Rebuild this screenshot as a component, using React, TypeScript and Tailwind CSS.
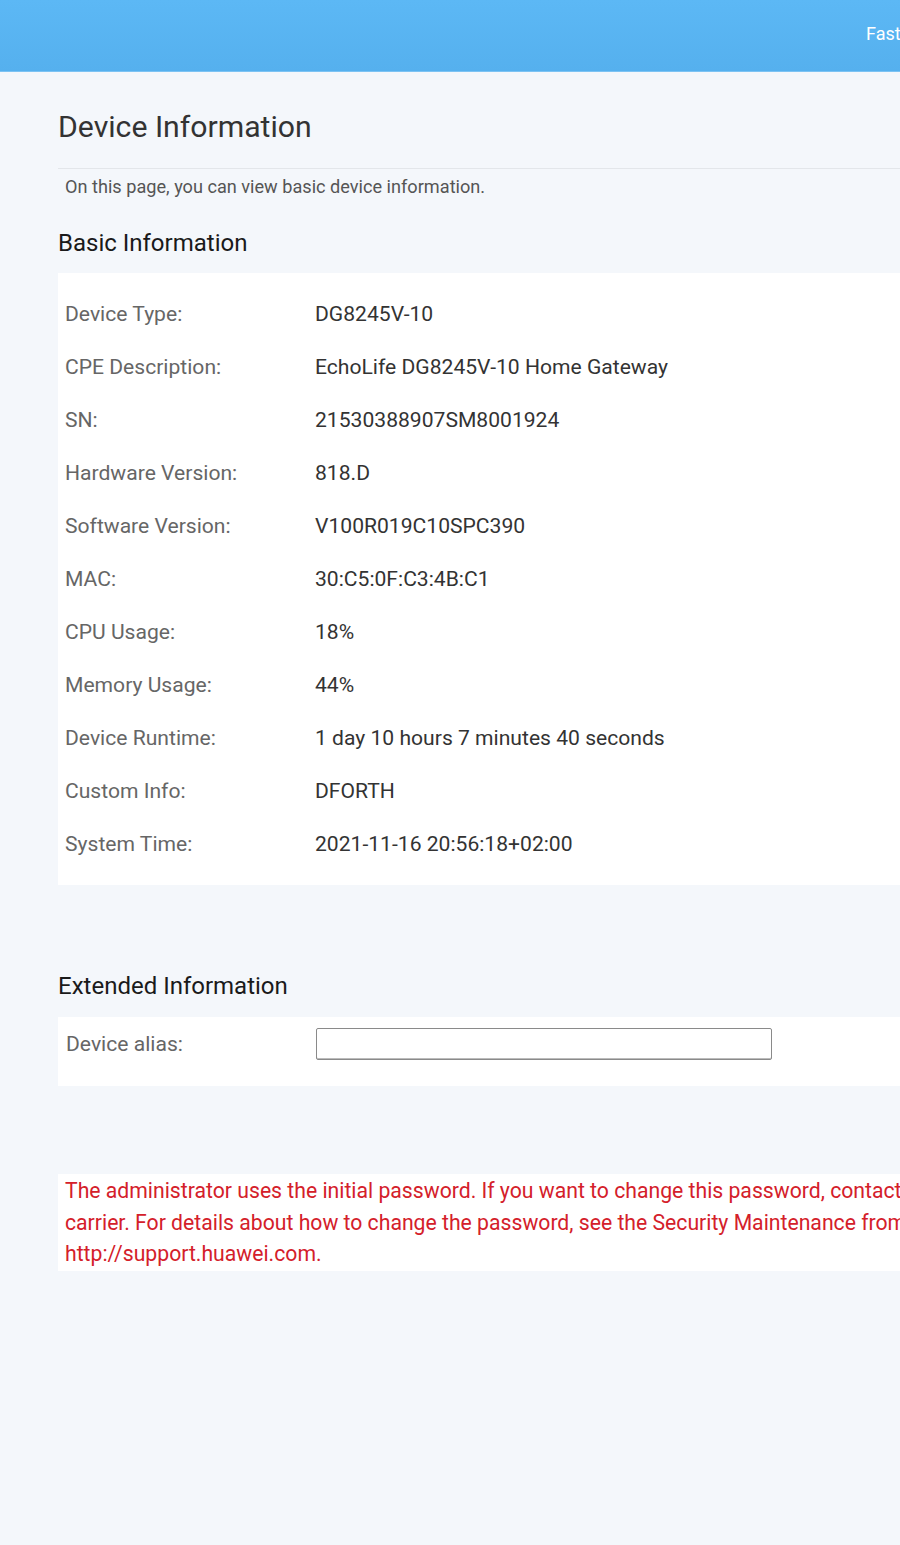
const basicInfo: [string, string][] = [
  ['Device Type:', 'DG8245V-10'],
  ['CPE Description:', 'EchoLife DG8245V-10 Home Gateway'],
  ['SN:', '21530388907SM8001924'],
  ['Hardware Version:', '818.D'],
  ['Software Version:', 'V100R019C10SPC390'],
  ['MAC:', '30:C5:0F:C3:4B:C1'],
  ['CPU Usage:', '18%'],
  ['Memory Usage:', '44%'],
  ['Device Runtime:', '1 day 10 hours 7 minutes 40 seconds'],
  ['Custom Info:', 'DFORTH'],
  ['System Time:', '2021-11-16 20:56:18+02:00'],
];

export default function App() {
  return (
    <div
      className="w-[900px] min-h-[1545px] overflow-hidden bg-[#f4f7fb]"
      style={{ fontFamily: 'Roboto, "Liberation Sans", sans-serif' }}
    >
      {/* top bar */}
      <div className="h-[72px] bg-gradient-to-b from-[#5cb8f5] to-[#55b0ee] border-b border-[#7cc3f3] flex items-center pb-[4px] overflow-hidden">
        <span className="ml-[866px] text-white text-[18px] whitespace-nowrap">Fast</span>
      </div>

      <div className="ml-[58px] w-[900px]">
        <h1 className="pt-[35px] text-[30.2px] leading-[40px] text-[#333]">Device Information</h1>
        <div className="mt-[21px] h-px bg-[#e3e6ea]" />
        <p className="pl-[7px] pt-[7px] text-[18.15px] leading-[22px] text-[#555]">
          On this page, you can view basic device information.
        </p>

        <h2 className="mt-[30px] text-[24px] leading-[30px] text-[#1a1a1a]">Basic Information</h2>
        <div className="mt-[15px] bg-white py-[14.5px]">
          {basicInfo.map(([label, value]) => (
            <div key={label} className="flex items-center h-[53px] text-[21.1px]">
              <span className="w-[257px] pl-[7px] text-[#666]">{label}</span>
              <span className="text-[#333] whitespace-nowrap">{value}</span>
            </div>
          ))}
        </div>

        <h2 className="mt-[86px] text-[24px] leading-[30px] text-[#1a1a1a]">Extended Information</h2>
        <div className="mt-[16px] h-[69px] bg-white flex items-start">
          <span className="w-[258px] pl-[8px] pt-[13px] text-[21.1px] leading-[28px] text-[#666]">Device alias:</span>
          <input
            type="text"
            className="mt-[11px] w-[456px] h-[32px] border border-[#8a8a8a] rounded-[2px] bg-white shadow-[inset_0_-1px_0_#bbb]"
          />
        </div>

        <div className="mt-[88px] bg-white pl-[7px] py-[1px] text-[21.2px] leading-[31.5px] text-[#d4202a] whitespace-nowrap">
          The administrator uses the initial password. If you want to change this password, contact your
          <br />
          carrier. For details about how to change the password, see the Security Maintenance from
          <br />
          http://support.huawei.com.
        </div>
      </div>
    </div>
  );
}
